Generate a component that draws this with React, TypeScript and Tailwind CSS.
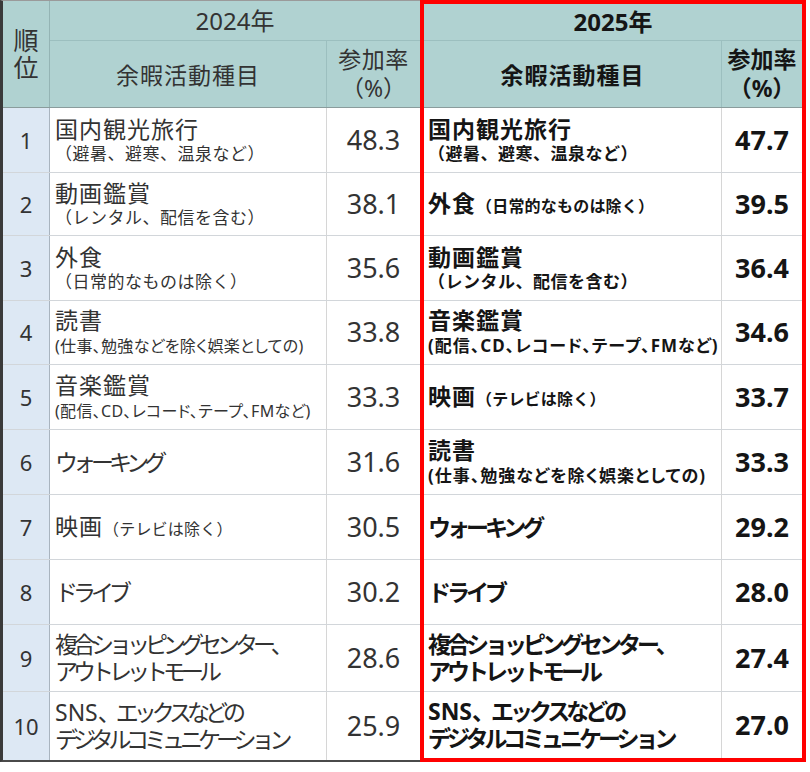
import React from "react";

type Row = {
  rank: number;
  main?: string;
  sub?: string;
  cond?: boolean;
  inline?: string;
  kana?: boolean;
  lines?: string[];
  pct: string;
};

const HCLS = [
  "h-[65px]",
  "h-[63px]",
  "h-[65px]",
  "h-[64px]",
  "h-[65px]",
  "h-[65px]",
  "h-[65px]",
  "h-[65px]",
  "h-[67px]",
  "h-[68px]",
];
const HCLS_R = [...HCLS.slice(0, 9), "h-[66px]"];

const rows2024: Row[] = [
  { rank: 1, main: "国内観光旅行", sub: "（避暑、避寒、温泉など）", pct: "48.3" },
  { rank: 2, main: "動画鑑賞", sub: "（レンタル、配信を含む）", pct: "38.1" },
  { rank: 3, main: "外食", sub: "（日常的なものは除く）", pct: "35.6" },
  { rank: 4, main: "読書", sub: "(仕事、勉強などを除く娯楽としての)", cond: true, pct: "33.8" },
  { rank: 5, main: "音楽鑑賞", sub: "(配信、CD、レコード、テープ、FMなど)", cond: true, pct: "33.3" },
  { rank: 6, main: "ウォーキング", kana: true, pct: "31.6" },
  { rank: 7, main: "映画", inline: "（テレビは除く）", pct: "30.5" },
  { rank: 8, main: "ドライブ", kana: true, pct: "30.2" },
  { rank: 9, lines: ["複合ショッピングセンター、", "アウトレットモール"], pct: "28.6" },
  { rank: 10, lines: ["SNS|、エックスなどの", "デジタルコミュニケーション"], pct: "25.9" },
];

const rows2025: Row[] = [
  { rank: 1, main: "国内観光旅行", sub: "（避暑、避寒、温泉など）", pct: "47.7" },
  { rank: 2, main: "外食", inline: "（日常的なものは除く）", pct: "39.5" },
  { rank: 3, main: "動画鑑賞", sub: "（レンタル、配信を含む）", pct: "36.4" },
  { rank: 4, main: "音楽鑑賞", sub: "(配信、CD、レコード、テープ、FMなど)", cond: true, pct: "34.6" },
  { rank: 5, main: "映画", inline: "（テレビは除く）", pct: "33.7" },
  { rank: 6, main: "読書", sub: "(仕事、勉強などを除く娯楽としての)", cond: true, pct: "33.3" },
  { rank: 7, main: "ウォーキング", kana: true, pct: "29.2" },
  { rank: 8, main: "ドライブ", kana: true, pct: "28.0" },
  { rank: 9, lines: ["複合ショッピングセンター、", "アウトレットモール"], pct: "27.4" },
  { rank: 10, lines: ["SNS|、エックスなどの", "デジタルコミュニケーション"], pct: "27.0" },
];

function KanaLine({ text, bold }: { text: string; bold: boolean }) {
  const parts = text.split("|");
  const tr = bold ? "tracking-[-4px]" : "tracking-[-5px]";
  if (parts.length === 2) {
    return (
      <span className="text-[23px] leading-[27px] whitespace-nowrap">
        <span className="tracking-[0px]">{parts[0]}</span>
        <span className={tr}>{parts[1]}</span>
      </span>
    );
  }
  return <span className={"text-[23px] leading-[27px] whitespace-nowrap " + tr}>{text}</span>;
}

function Name({ r, bold }: { r: Row; bold: boolean }) {
  if (r.lines) {
    return (
      <div className="flex flex-col">
        {r.lines.map((l) => (
          <KanaLine key={l} text={l} bold={bold} />
        ))}
      </div>
    );
  }
  if (r.kana && r.main) {
    return <KanaLine text={r.main} bold={bold} />;
  }
  if (r.inline) {
    return (
      <div className="flex items-baseline whitespace-nowrap">
        <span className="text-[23px] leading-[28px] tracking-[1px]">{r.main}</span>
        <span className="text-[16px] leading-[28px] tracking-[0.2px]">{r.inline}</span>
      </div>
    );
  }
  return (
    <div className="flex flex-col whitespace-nowrap">
      <span className="text-[23px] leading-[27px] tracking-[1px]">{r.main}</span>
      {r.sub &&
        (r.cond ? (
          bold ? (
            <span className="text-[17px] leading-[24px] [font-feature-settings:'palt'] tracking-[1px]">{r.sub}</span>
          ) : (
            <span className="text-[16px] leading-[24px] [font-feature-settings:'palt'] tracking-[0.3px]">{r.sub}</span>
          )
        ) : (
          <span className="text-[17px] leading-[22px] tracking-[0.5px]">{r.sub}</span>
        ))}
    </div>
  );
}

export default function App() {
  return (
    <div className="h-[772px] w-[810px] bg-white [font-family:'Noto_Sans','Noto_Sans_CJK_JP',sans-serif]">
      <div className="flex items-start">
        {/* Left: rank + 2024 */}
        <div className="flex w-[420px] flex-col border-l-[3px] border-t border-b-2 border-l-[#3a3a3a] border-t-[#9a9a9a] border-b-[#4a4a4a] text-[#333]">
          <div className="flex h-[107px] border-b border-[#8a9c9c] bg-[#b0d2d1]">
            <div className="flex w-[47px] flex-col items-center justify-center border-r border-[#94b4b4] text-[25px] leading-[27px]">
              <span>順</span>
              <span>位</span>
            </div>
            <div className="flex flex-1 flex-col">
              <div className="flex h-[40px] items-center justify-center border-b border-[#9cbfbf] text-[24px]">
                2024年
              </div>
              <div className="flex flex-1">
                <div className="flex w-[277px] items-center justify-center border-r border-[#9cbfbf] pt-[2px] text-[23px] tracking-[1px]">
                  余暇活動種目
                </div>
                <div className="flex flex-1 flex-col items-center justify-center text-[23px] leading-[29px]">
                  <span className="tracking-[0.5px]">参加率</span>
                  <span>（%）</span>
                </div>
              </div>
            </div>
          </div>
          {rows2024.map((r, i) => (
            <div
              key={r.rank}
              className={"flex " + HCLS[i] + (i < 9 ? " border-b border-[#d2d6da]" : "")}
            >
              <div className="flex w-[47px] items-center justify-center border-r border-[#a9b4bf] bg-[#dde8f4] text-[22px]">
                {r.rank}
              </div>
              <div className="flex w-[277px] items-center overflow-hidden border-r border-[#d6d6d6] pl-[5px]">
                <Name r={r} bold={false} />
              </div>
              <div className="flex flex-1 items-center justify-center text-[27px]">{r.pct}</div>
            </div>
          ))}
        </div>

        {/* Right: 2025 highlighted */}
        <div className="flex w-[386px] flex-col border-[4px] border-[#ff0000] font-bold text-[#151515]">
          <div className="flex h-[104px] flex-col border-b border-[#8a9c9c] bg-[#b0d2d1]">
            <div className="flex h-[37px] items-center justify-center border-b border-[#9cbfbf] text-[24px]">
              2025年
            </div>
            <div className="flex flex-1">
              <div className="flex w-[298px] items-center justify-center border-r border-[#9cbfbf] pt-[2px] text-[23px] tracking-[1px]">
                余暇活動種目
              </div>
              <div className="flex flex-1 flex-col items-center justify-center text-[23px] leading-[29px]">
                <span>参加率</span>
                <span>（%）</span>
              </div>
            </div>
          </div>
          {rows2025.map((r, i) => (
            <div
              key={r.rank}
              className={"flex " + HCLS_R[i] + (i < 9 ? " border-b border-[#d2d6da]" : "")}
            >
              <div className="flex w-[298px] items-center overflow-hidden border-r border-[#d6d6d6] pl-[4px]">
                <Name r={r} bold={true} />
              </div>
              <div className="flex flex-1 items-center justify-center text-[27px]">{r.pct}</div>
            </div>
          ))}
        </div>
      </div>
    </div>
  );
}
